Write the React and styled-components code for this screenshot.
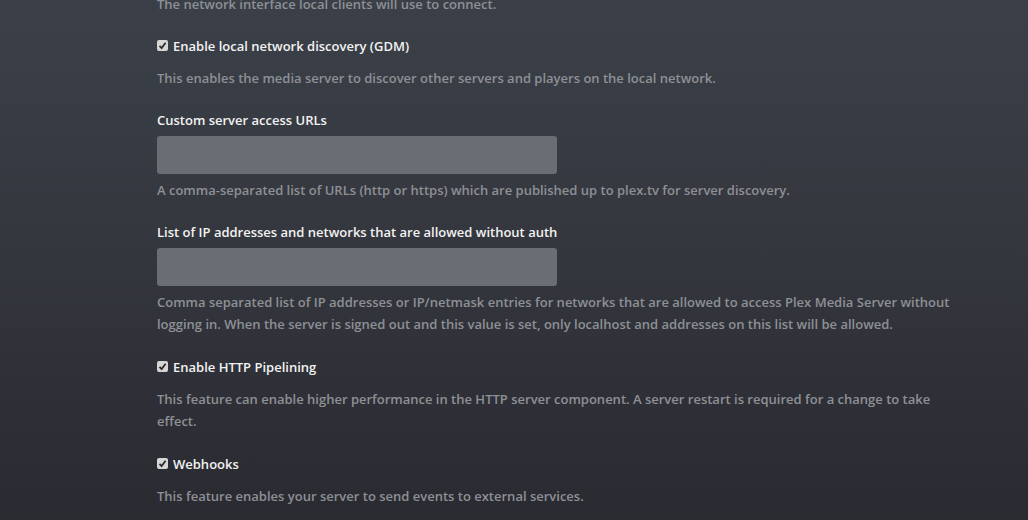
import React from "react";
import styled, { createGlobalStyle } from "styled-components";

const GlobalStyle = createGlobalStyle`
  html, body {
    margin: 0;
    height: 100%;
    overflow: hidden;
  }
  body {
    background: linear-gradient(180deg, #3b4048 0%, #33353c 55%, #2a2a31 100%);
    font-family: "Open Sans", "Noto Sans", sans-serif;
  }
`;

const Page = styled.div`
  width: 1028px;
  height: 520px;
  overflow: hidden;
`;

const Form = styled.div`
  margin-top: -7px;
  padding-left: 157px;
  width: 800px;
  display: flex;
  flex-direction: column;
  gap: 21px;
`;

const Group = styled.div`
  display: flex;
  flex-direction: column;
`;

const Label = styled.div`
  display: flex;
  align-items: center;
  gap: 5px;
  height: 20px;
  color: #f2f2f2;
  font-size: 13px;
  font-weight: 600;
  margin-bottom: ${(p) => (p.$field ? "6px" : "11px")};
`;

const Box = styled.span`
  width: 11px;
  height: 11px;
  border-radius: 2px;
  background: #d6d6d6;
  display: flex;
  align-items: center;
  justify-content: center;
  margin-top: -2px;
`;

const Field = styled.div`
  width: 400px;
  height: 38px;
  border-radius: 3px;
  background: #6a6d73;
  margin-bottom: 5px;
`;

const Help = styled.div`
  color: #8d9095;
  font-size: 13px;
  font-weight: 600;
  line-height: 22px;
  margin-bottom: ${(p) => (p.$multi ? "1px" : "0")};
`;

const Check = () => (
  <Box>
    <svg width="9" height="9" viewBox="0 0 9 9">
      <path d="M1.5 4.8 L3.6 7 L7.6 1.8" fill="none" stroke="#2c2c2c" strokeWidth="1.8" />
    </svg>
  </Box>
);

const CheckItem = ({ label, help, multi }) => (
  <Group>
    <Label>
      <Check />
      {label}
    </Label>
    <Help $multi={multi}>{help}</Help>
  </Group>
);

const TextItem = ({ label, help, multi }) => (
  <Group>
    <Label $field>{label}</Label>
    <Field />
    <Help $multi={multi}>{help}</Help>
  </Group>
);

export default function App() {
  return (
    <Page>
      <GlobalStyle />
      <Form>
        <Group>
          <Help>The network interface local clients will use to connect.</Help>
        </Group>
        <CheckItem
          label="Enable local network discovery (GDM)"
          help="This enables the media server to discover other servers and players on the local network."
        />
        <TextItem
          label="Custom server access URLs"
          help="A comma-separated list of URLs (http or https) which are published up to plex.tv for server discovery."
        />
        <TextItem
          multi
          label="List of IP addresses and networks that are allowed without auth"
          help="Comma separated list of IP addresses or IP/netmask entries for networks that are allowed to access Plex Media Server without logging in. When the server is signed out and this value is set, only localhost and addresses on this list will be allowed."
        />
        <CheckItem
          multi
          label="Enable HTTP Pipelining"
          help="This feature can enable higher performance in the HTTP server component. A server restart is required for a change to take effect."
        />
        <CheckItem
          label="Webhooks"
          help="This feature enables your server to send events to external services."
        />
      </Form>
    </Page>
  );
}
